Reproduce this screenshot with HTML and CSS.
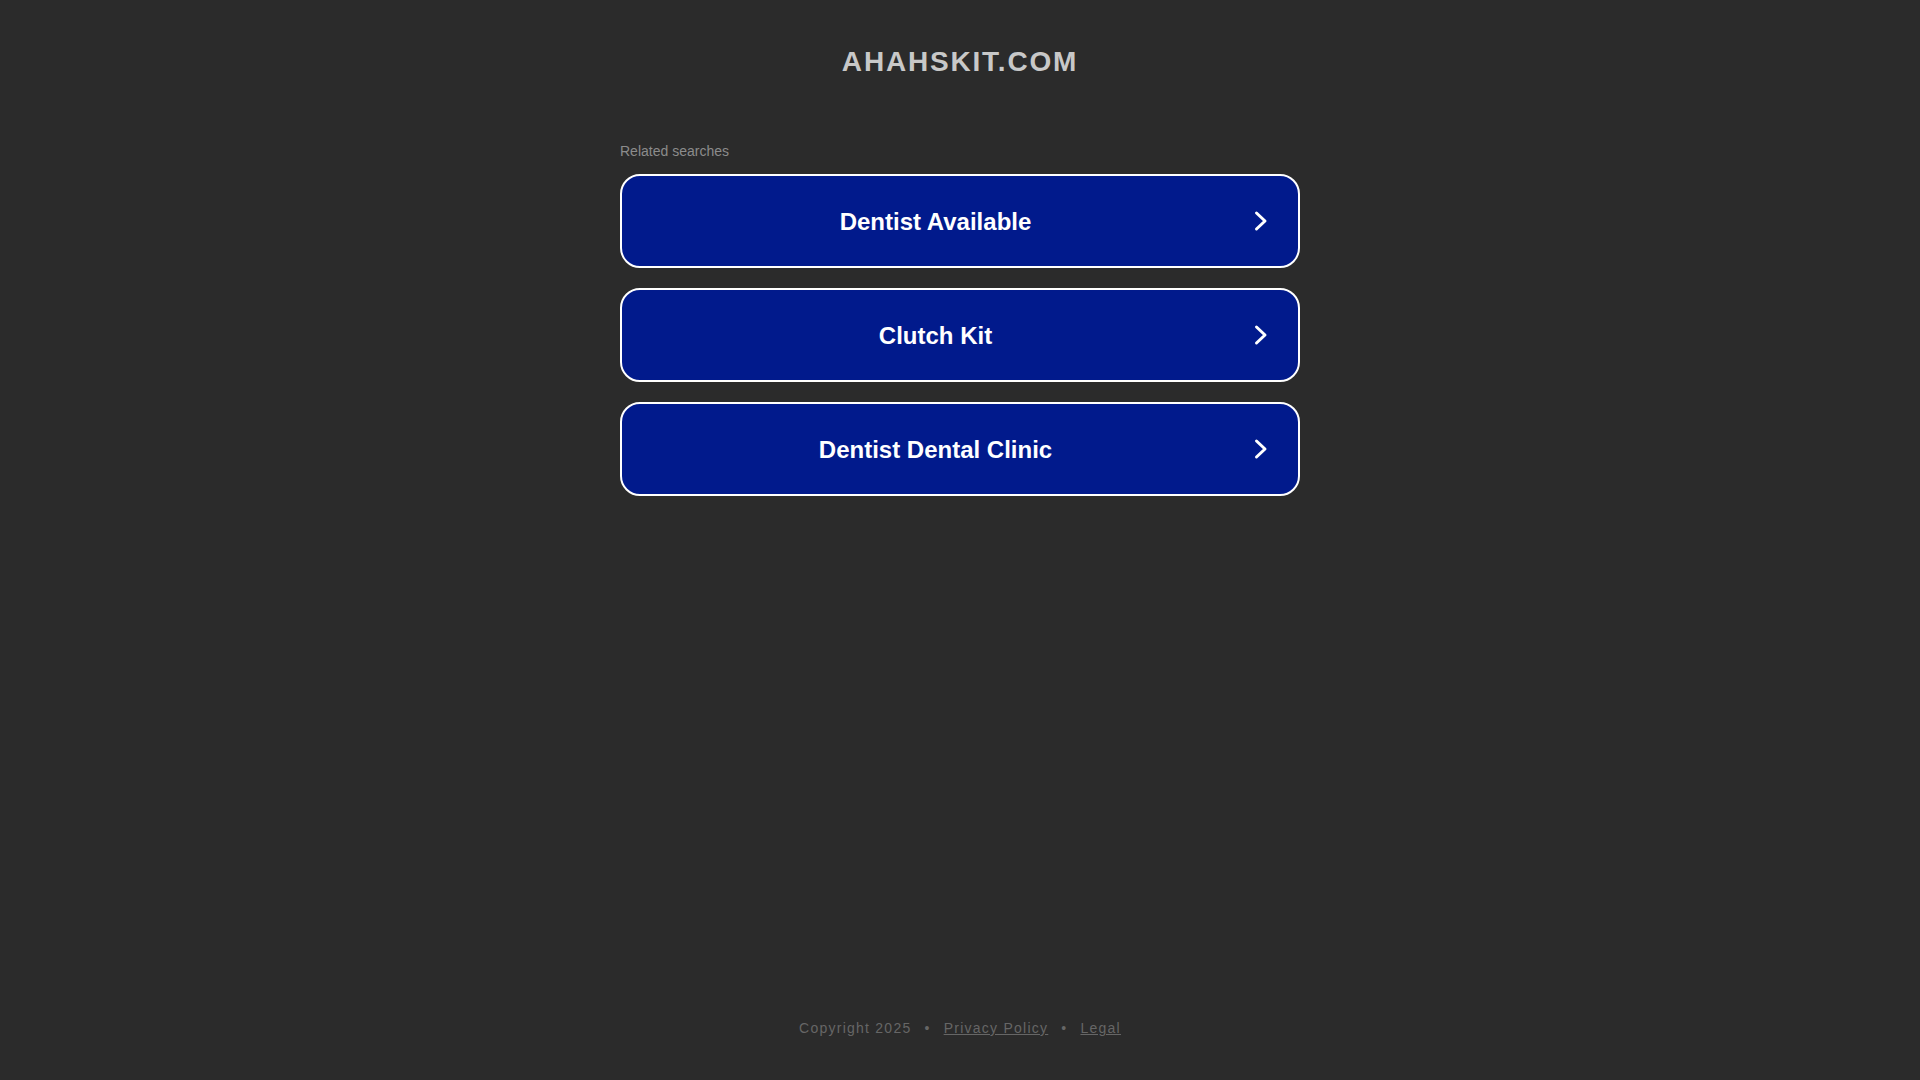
FILE: index.html
```html
<!DOCTYPE html>
<html lang="en">
<head>
<meta charset="utf-8">
<title>ahahskit.com</title>
<link rel="stylesheet" href="styles.css">
</head>
<body>
<div class="page">
  <header class="header">
    <h1 class="domain">AHAHSKIT.COM</h1>
  </header>
  <main class="content">
    <p class="label">Related searches</p>
    <div class="list">
      <a class="btn" href="#"><span class="btn-text">Dentist Available</span><svg class="chev" width="16" height="24" viewBox="0 0 16 24"><polyline points="3.5,4 12,12 3.5,20" fill="none" stroke="#ffffff" stroke-width="3" stroke-linecap="round" stroke-linejoin="round"/></svg></a>
      <a class="btn" href="#"><span class="btn-text">Clutch Kit</span><svg class="chev" width="16" height="24" viewBox="0 0 16 24"><polyline points="3.5,4 12,12 3.5,20" fill="none" stroke="#ffffff" stroke-width="3" stroke-linecap="round" stroke-linejoin="round"/></svg></a>
      <a class="btn" href="#"><span class="btn-text">Dentist Dental Clinic</span><svg class="chev" width="16" height="24" viewBox="0 0 16 24"><polyline points="3.5,4 12,12 3.5,20" fill="none" stroke="#ffffff" stroke-width="3" stroke-linecap="round" stroke-linejoin="round"/></svg></a>
    </div>
  </main>
  <footer class="footer">
    <span>Copyright 2025</span>
    <span class="dot">•</span>
    <a class="flink" href="#">Privacy Policy</a>
    <span class="dot">•</span>
    <a class="flink" href="#">Legal</a>
  </footer>
</div>
</body>
</html>
```
FILE: styles.css
```css
html, body {
  margin: 0;
  padding: 0;
  background: #2b2b2b;
}
body {
  font-family: "Liberation Sans", Arial, sans-serif;
}
.page {
  min-height: 100vh;
  display: flex;
  flex-direction: column;
  align-items: center;
}
.header {
  padding-top: 46px;
}
.domain {
  margin: 0;
  font-size: 28px;
  line-height: 32px;
  font-weight: bold;
  letter-spacing: 1.8px;
  color: #c8c8c8;
  text-align: center;
}
.content {
  width: 680px;
}
.label {
  margin: 65px 0 15px 0;
  font-size: 14px;
  line-height: 16px;
  color: #8c8c8c;
}
.list {
  display: flex;
  flex-direction: column;
  gap: 20px;
}
.btn {
  box-sizing: border-box;
  height: 94px;
  display: flex;
  align-items: center;
  border: 2px solid #ffffff;
  border-radius: 20px;
  background: #011a8c;
  color: #ffffff;
  text-decoration: none;
  padding-right: 29px;
}
.btn-text {
  flex: 1;
  text-align: center;
  font-size: 24px;
  font-weight: bold;
  line-height: 28px;
  padding-top: 1px;
}
.chev {
  display: block;
  flex: none;
  margin-left: 4px;
}
.footer {
  margin-top: auto;
  padding-bottom: 44px;
  display: flex;
  gap: 13px;
  font-size: 14px;
  line-height: 16px;
  letter-spacing: 1.25px;
  color: #666666;
}
.flink {
  color: #666666;
  text-decoration: underline;
}
```
